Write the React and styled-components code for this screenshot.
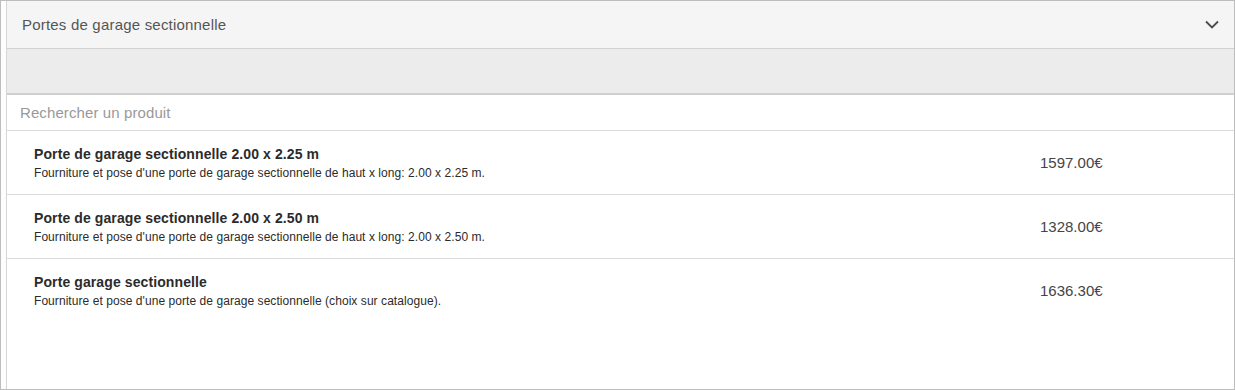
import React from "react";
import styled, { createGlobalStyle } from "styled-components";

const GlobalStyle = createGlobalStyle`
  html, body {
    margin: 0;
    padding: 0;
    background: #ffffff;
  }
  body {
    font-family: "Liberation Sans", Arial, sans-serif;
  }
`;

const products = [
  {
    title: "Porte de garage sectionnelle 2.00 x 2.25 m",
    desc: "Fourniture et pose d'une porte de garage sectionnelle de haut x long: 2.00 x 2.25 m.",
    price: "1597.00€",
  },
  {
    title: "Porte de garage sectionnelle 2.00 x 2.50 m",
    desc: "Fourniture et pose d'une porte de garage sectionnelle de haut x long: 2.00 x 2.50 m.",
    price: "1328.00€",
  },
  {
    title: "Porte garage sectionnelle",
    desc: "Fourniture et pose d'une porte de garage sectionnelle (choix sur catalogue).",
    price: "1636.30€",
  },
];

const Chevron = () => (
  <svg width="14" height="9" viewBox="0 0 14 9" fill="none">
    <path d="M1 1.5 L7 7.5 L13 1.5" stroke="#4a4a4a" strokeWidth="1.8" />
  </svg>
);

const App = () => {
  return (
    <>
      <GlobalStyle />
      <Frame>
        <Gutter />
        <Panel>
          <Header>
            <HeaderTitle>Portes de garage sectionnelle</HeaderTitle>
            <Chevron />
          </Header>
          <Toolbar />
          <SearchInput placeholder="Rechercher un produit" />
          <List>
            {products.map((p) => (
              <Row key={p.title}>
                <Info>
                  <Title>{p.title}</Title>
                  <Desc>{p.desc}</Desc>
                </Info>
                <Price>{p.price}</Price>
              </Row>
            ))}
          </List>
        </Panel>
      </Frame>
    </>
  );
};

const Frame = styled.div`
  display: flex;
  height: 390px;
  box-sizing: border-box;
  border: 1px solid #bdbdbd;
  background: #ffffff;
`;

const Gutter = styled.div`
  width: 5px;
  flex-shrink: 0;
  background: #fdfdfd;
`;

const Panel = styled.div`
  flex: 1;
  display: flex;
  flex-direction: column;
  border-left: 1px solid #d6d6d6;
  min-width: 0;
`;

const Header = styled.div`
  height: 47px;
  display: flex;
  align-items: center;
  justify-content: space-between;
  padding: 0 15px 0 15px;
  background: #f5f5f5;
  border-bottom: 1px solid #d2d2d2;
`;

const HeaderTitle = styled.span`
  font-size: 15px;
  letter-spacing: 0.2px;
  color: #555555;
`;

const Toolbar = styled.div`
  height: 44px;
  background: #ececec;
  border-bottom: 2px solid #d0d0d0;
`;

const SearchInput = styled.input`
  height: 36px;
  box-sizing: border-box;
  border: none;
  border-bottom: 1px solid #dcdcdc;
  padding: 0 13px;
  font-family: "Liberation Sans", Arial, sans-serif;
  font-size: 15px;
  letter-spacing: 0.1px;
  color: #333333;
  outline: none;
  &::placeholder {
    color: #999999;
  }
`;

const List = styled.div`
  display: flex;
  flex-direction: column;
`;

const Row = styled.div`
  height: 63px;
  display: flex;
  align-items: center;
  padding-left: 27px;
  border-bottom: 1px solid #dcdcdc;
  &:last-child {
    border-bottom: none;
  }
`;

const Info = styled.div`
  width: 1006px;
  display: flex;
  flex-direction: column;
  gap: 4px;
`;

const Title = styled.div`
  font-size: 14px;
  font-weight: 700;
  letter-spacing: 0.1px;
  color: #2b2b2b;
`;

const Desc = styled.div`
  font-size: 12px;
  letter-spacing: 0.06px;
  color: #2b2b2b;
`;

const Price = styled.div`
  font-size: 15px;
  color: #444444;
`;

export default App;
